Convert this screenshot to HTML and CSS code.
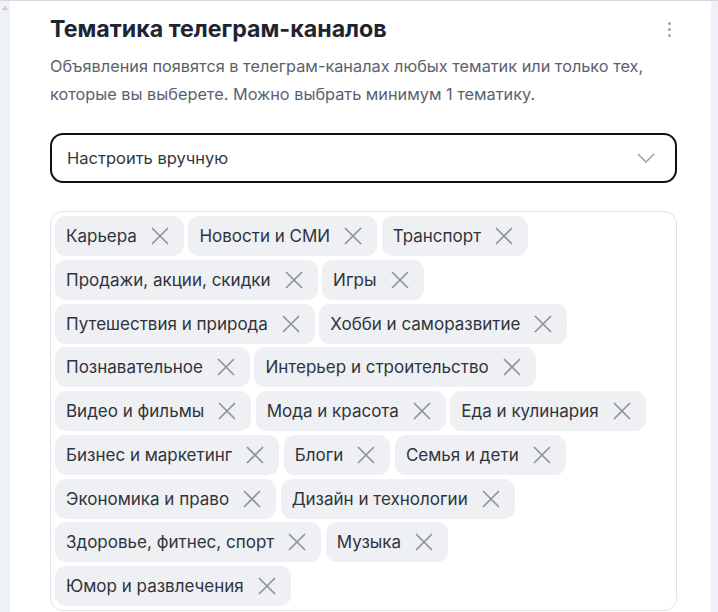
FILE: index.html
```html
<!DOCTYPE html>
<html lang="ru">
<head>
<meta charset="utf-8">
<link rel="stylesheet" href="styles.css">
</head>
<body>
<div class="page">
  <div class="gutter"><span class="scroll-arrow"></span></div>
  <main class="card">
    <header class="head">
      <h1 class="title">Тематика телеграм-каналов</h1>
      <span class="kebab"><i></i><i></i><i></i></span>
    </header>
    <p class="desc">Объявления появятся в телеграм-каналах любых тематик или только тех, которые вы выберете. Можно выбрать минимум 1 тематику.</p>
    <div class="select">
      <span class="select-text">Настроить вручную</span>
      <svg class="chevron" width="18" height="10" viewBox="0 0 18 10"><path d="M1 1 L9 9 L17 1" fill="none" stroke="#9ea3ad" stroke-width="1.6"/></svg>
    </div>
    <div class="tags">
      <div class="row">
        <span class="tag">Карьера<svg class="x" viewBox="0 0 18 18"><path d="M1 1L17 17M17 1L1 17"/></svg></span>
        <span class="tag">Новости и СМИ<svg class="x" viewBox="0 0 18 18"><path d="M1 1L17 17M17 1L1 17"/></svg></span>
        <span class="tag">Транспорт<svg class="x" viewBox="0 0 18 18"><path d="M1 1L17 17M17 1L1 17"/></svg></span>
      </div>
      <div class="row">
        <span class="tag">Продажи, акции, скидки<svg class="x" viewBox="0 0 18 18"><path d="M1 1L17 17M17 1L1 17"/></svg></span>
        <span class="tag">Игры<svg class="x" viewBox="0 0 18 18"><path d="M1 1L17 17M17 1L1 17"/></svg></span>
      </div>
      <div class="row">
        <span class="tag">Путешествия и природа<svg class="x" viewBox="0 0 18 18"><path d="M1 1L17 17M17 1L1 17"/></svg></span>
        <span class="tag">Хобби и саморазвитие<svg class="x" viewBox="0 0 18 18"><path d="M1 1L17 17M17 1L1 17"/></svg></span>
      </div>
      <div class="row">
        <span class="tag">Познавательное<svg class="x" viewBox="0 0 18 18"><path d="M1 1L17 17M17 1L1 17"/></svg></span>
        <span class="tag">Интерьер и строительство<svg class="x" viewBox="0 0 18 18"><path d="M1 1L17 17M17 1L1 17"/></svg></span>
      </div>
      <div class="row">
        <span class="tag">Видео и фильмы<svg class="x" viewBox="0 0 18 18"><path d="M1 1L17 17M17 1L1 17"/></svg></span>
        <span class="tag">Мода и красота<svg class="x" viewBox="0 0 18 18"><path d="M1 1L17 17M17 1L1 17"/></svg></span>
        <span class="tag">Еда и кулинария<svg class="x" viewBox="0 0 18 18"><path d="M1 1L17 17M17 1L1 17"/></svg></span>
      </div>
      <div class="row">
        <span class="tag">Бизнес и маркетинг<svg class="x" viewBox="0 0 18 18"><path d="M1 1L17 17M17 1L1 17"/></svg></span>
        <span class="tag">Блоги<svg class="x" viewBox="0 0 18 18"><path d="M1 1L17 17M17 1L1 17"/></svg></span>
        <span class="tag">Семья и дети<svg class="x" viewBox="0 0 18 18"><path d="M1 1L17 17M17 1L1 17"/></svg></span>
      </div>
      <div class="row">
        <span class="tag">Экономика и право<svg class="x" viewBox="0 0 18 18"><path d="M1 1L17 17M17 1L1 17"/></svg></span>
        <span class="tag">Дизайн и технологии<svg class="x" viewBox="0 0 18 18"><path d="M1 1L17 17M17 1L1 17"/></svg></span>
      </div>
      <div class="row">
        <span class="tag">Здоровье, фитнес, спорт<svg class="x" viewBox="0 0 18 18"><path d="M1 1L17 17M17 1L1 17"/></svg></span>
        <span class="tag">Музыка<svg class="x" viewBox="0 0 18 18"><path d="M1 1L17 17M17 1L1 17"/></svg></span>
      </div>
      <div class="row">
        <span class="tag">Юмор и развлечения<svg class="x" viewBox="0 0 18 18"><path d="M1 1L17 17M17 1L1 17"/></svg></span>
      </div>
    </div>
  </main>
  <div class="gutter-right"></div>
</div>
</body>
</html>
```
FILE: styles.css
```css
* { box-sizing: border-box; }
html, body { margin: 0; height: 100%; }
body {
  background: #eef1f5;
  font-family: Inter, "Noto Sans", sans-serif;
  color: #333840;
  overflow: hidden;
}
.page {
  display: flex;
  height: 612px;
  border-top: 1px solid #d7d9dd;
}
.gutter {
  width: 10px;
  flex: none;
  background: #eef1f5;
  position: relative;
}
.scroll-arrow {
  position: absolute;
  left: 2px;
  top: 5px;
  width: 0; height: 0;
  border-left: 3px solid transparent;
  border-right: 3px solid transparent;
  border-bottom: 4px solid #c7cbd1;
}
.card {
  width: 701px;
  flex: none;
  background: #fff;
  padding: 12px 34px 0 40px;
}
.gutter-right { flex: 1; background: #eef1f5; }
.head {
  display: flex;
  justify-content: space-between;
  align-items: center;
}
.title {
  margin: 0;
  font-size: 23.2px;
  line-height: 32px;
  font-weight: 700;
  color: #1e2432;
}
.kebab {
  display: flex;
  flex-direction: column;
  gap: 3px;
  margin-right: 6px;
}
.kebab i {
  width: 3px; height: 3px;
  border-radius: 50%;
  background: #a3a7ad;
}
.desc {
  margin: 7px 0 0;
  font-size: 16.3px;
  line-height: 28px;
  color: #5b616c;
  max-width: 630px;
}
.select {
  margin-top: 25px;
  width: 627px;
  height: 50px;
  border: 2px solid #111;
  border-radius: 13px;
  display: flex;
  align-items: center;
  justify-content: space-between;
  padding: 0 20px 0 15px;
}
.select-text { font-size: 16.5px; color: #333840; }
.tags {
  margin-top: 28px;
  width: 627px;
  min-height: 400px;
  border: 1px solid #e1e3e7;
  border-radius: 13px;
  padding: 4px 4px 3px;
  display: flex;
  flex-direction: column;
  gap: 3.75px;
}
.row {
  display: flex;
  gap: 4.5px;
}
.tag {
  display: inline-flex;
  align-items: center;
  height: 40px;
  padding: 0 15px 0 11px;
  background: #eef0f4;
  border-radius: 11px;
  font-size: 17px;
  color: #2f343c;
}
.x {
  width: 18px;
  height: 18px;
  margin-left: 14px;
  fill: none;
  stroke: #8e939c;
  stroke-width: 1.7;
}
```
